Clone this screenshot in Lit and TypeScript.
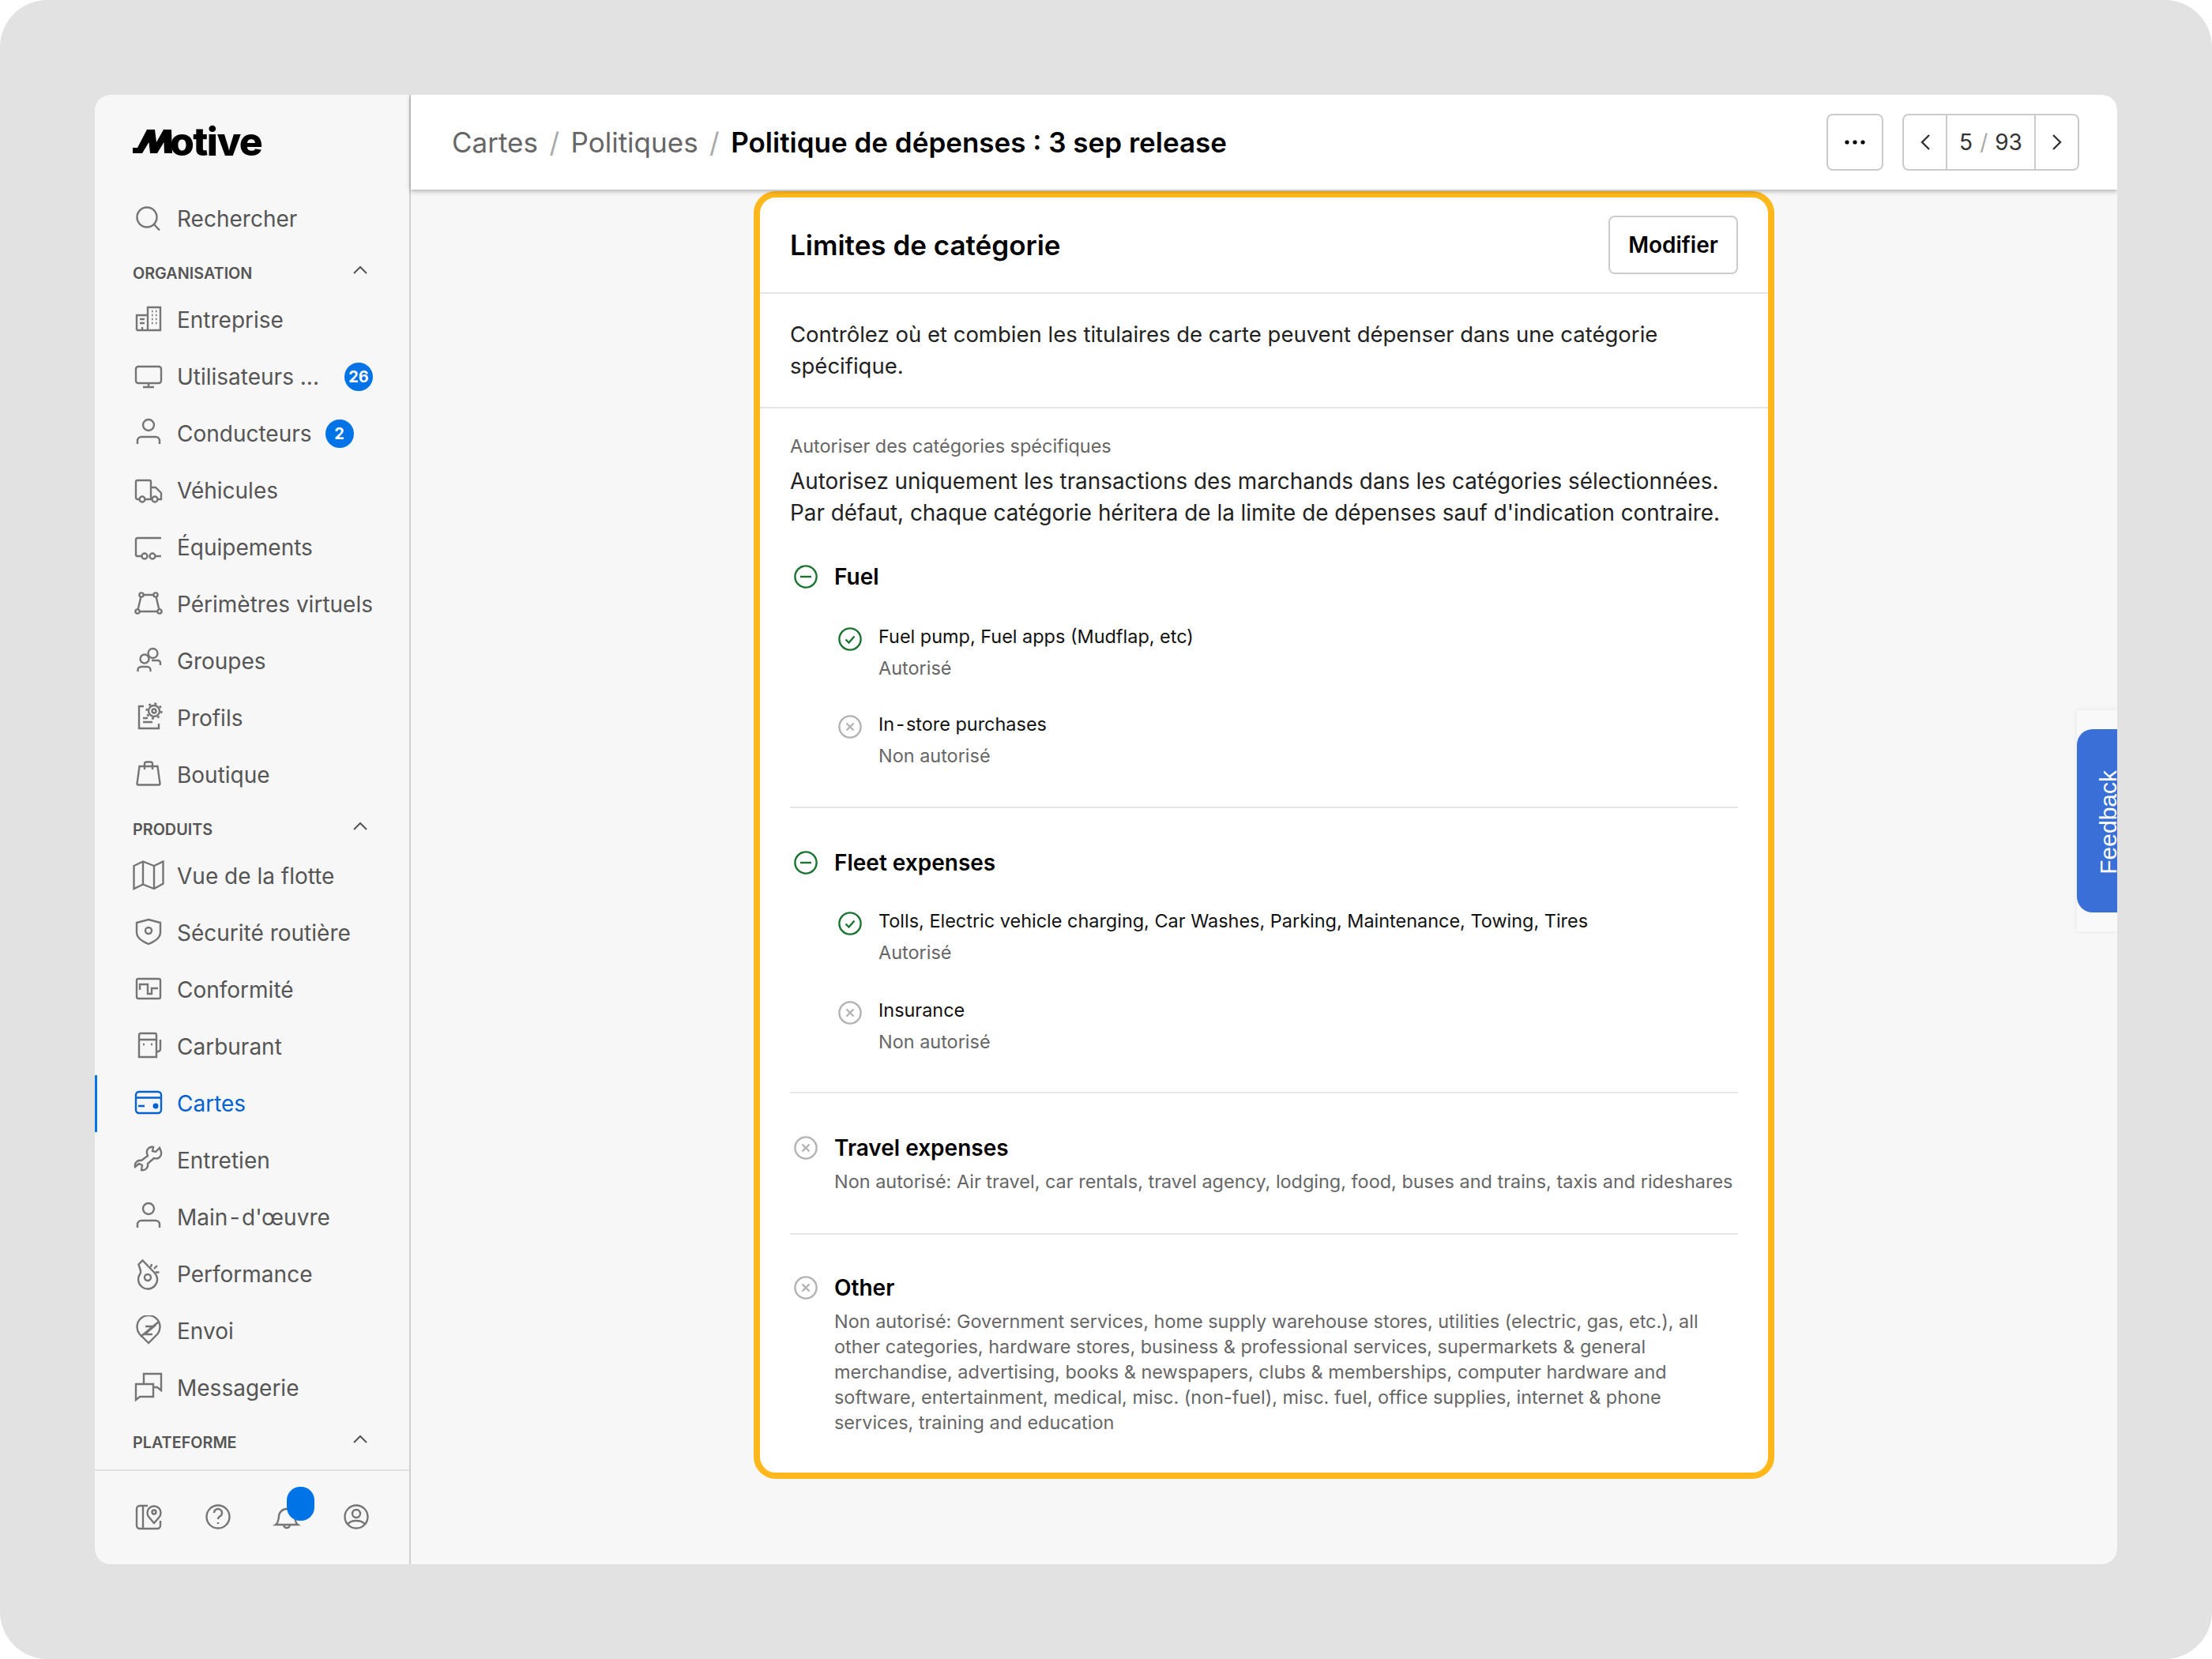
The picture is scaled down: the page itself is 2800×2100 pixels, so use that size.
import { LitElement, html, css, svg } from 'lit';
import { customElement } from 'lit/decorators.js';

const ICONS: Record<string, unknown> = {
  search: svg`<circle cx="18" cy="18" r="12.5"/><path d="M27 27l7 7.5"/>`,
  building: svg`<path d="M5 33V14h14M19 33V4h16v29zM5 33h30M9 19h6M9 24h6M12 29v4M24 9h1.5M29 9h1.5M24 14h1.5M29 14h1.5M24 19h1.5M29 19h1.5M24 24h1.5M29 24h1.5"/>`,
  monitor: svg`<rect x="4" y="7" width="32" height="21" rx="3"/><path d="M20 28v5M13 33h14"/>`,
  person: svg`<circle cx="20" cy="9" r="7"/><path d="M6 33v-4a5 5 0 0 1 5-5h18a5 5 0 0 1 5 5v4"/>`,
  truck: svg`<path d="M8 31H6a2 2 0 0 1-2-2V9a2 2 0 0 1 2-2h15a2 2 0 0 1 2 2v22h-7M23 16h6l7 7v8h-4M23 31h1"/><circle cx="12" cy="31" r="3.5"/><circle cx="28" cy="31" r="3.5"/>`,
  trailer: svg`<path d="M36 8H6a2 2 0 0 0-2 2v19a2 2 0 0 0 2 2h5M29 31h7"/><circle cx="15" cy="31" r="3.5"/><circle cx="25" cy="31" r="3.5"/>`,
  geofence: svg`<path d="M11 8h18l5 21H6z"/><circle cx="11" cy="8" r="2.6" fill="#f7f7f7"/><circle cx="29" cy="8" r="2.6" fill="#f7f7f7"/><circle cx="6" cy="29" r="2.6" fill="#f7f7f7"/><circle cx="34" cy="29" r="2.6" fill="#f7f7f7"/>`,
  group: svg`<circle cx="15" cy="17" r="5.5"/><circle cx="25.5" cy="10" r="6"/><path d="M6.5 33v-2a4 4 0 0 1 4-4h8a4 4 0 0 1 4 4v2M24 19h8a3 3 0 0 1 3 3v3"/>`,
  profile: svg`<path d="M14 5H8v28h25v-6M13 20h6M13 25h12"/><circle cx="27" cy="11" r="2.5"/><circle cx="27" cy="11" r="7"/><circle cx="27" cy="11" r="9.5" stroke-dasharray="3 4.46"/>`,
  bag: svg`<path d="M8.5 9h23l3 22a1.5 1.5 0 0 1-1.5 1.5H7A1.5 1.5 0 0 1 5.5 31zM15 13V6a2.5 2.5 0 0 1 2.5-2.5h5A2.5 2.5 0 0 1 25 6v7"/>`,
  map: svg`<path d="M1.5 7L13 1.5 27 7l11.5-5.5v28L27 36l-14-5.5L1.5 36zM13 1.5v29M27 7v29"/>`,
  shield: svg`<path d="M20 3l15 4v12c0 7-6 11-15 15C11 30 5 26 5 19V7z"/><circle cx="20" cy="17" r="4"/>`,
  compliance: svg`<rect x="5" y="6" width="30" height="25" rx="2"/><path d="M9 20v-7h10v12h5v-7h8"/>`,
  fuel: svg`<path d="M8 33V5a2 2 0 0 1 2-2h18a2 2 0 0 1 2 2v28zM8 11h22M30 26h2a3 3 0 0 0 3-3V11M13 17h2M23 17h2"/>`,
  card: svg`<rect x="4" y="5" width="32" height="27" rx="4"/><path d="M4 12.5h32M7 23h8"/><circle cx="29" cy="23" r="3.5" fill="currentColor" stroke="none"/>`,
  wrench: svg`<path d="M34 4l-5 5-4-1 1-5c-5-1-9 3-8 8l1 3-8 6c-5-1-9 3-8 8l5-4 4 2-1 6c5 1 9-3 8-8l8-7c5 2 10-2 9-8z"/>`,
  whistle: svg`<path d="M7.5 7.5l5-5L27.5 18a12 12 0 1 1-18.5 2c1.5-2.2 1.5-3.5.5-6z"/><circle cx="19" cy="24" r="4"/><path d="M23 11l1-4M27 13l4-4M28.5 17.5h5"/>`,
  dispatch: svg`<path d="M20 35L8.5 23.5a14.5 14.5 0 1 1 23 0z"/><path d="M33 8L10 27M16 14h11L15 24h10"/>`,
  chat: svg`<path d="M14 14V2h22v21l-5-4h-5M4 15h22v16H9l-5 4z"/>`,
  book: svg`<path d="M19 6H9a4 4 0 0 0-4 4v21a4 4 0 0 0 4 4h22a4 4 0 0 0 4-4v-6M13 6v29M27 28l-6-7a8.5 8.5 0 1 1 12 0z"/><circle cx="27" cy="14" r="2.5"/>`,
  help: svg`<circle cx="20" cy="20" r="14.5"/><path d="M15 15a5 5 0 1 1 8 4c-2 1-3 2-3 4M20 27v2"/>`,
  bell: svg`<path d="M6 30c3-2 3-5 4-10a10 10 0 0 1 20 0c1 5 1 8 4 10zM16 30a4 4 0 0 0 8 0"/>`,
  account: svg`<circle cx="20" cy="20" r="14.5"/><circle cx="20" cy="16" r="5"/><path d="M9 30c2-4 5-5 11-5s9 1 11 5"/>`,
};

const icon = (name: string) =>
  html`<svg class="ico" viewBox="0 0 40 40" fill="none" stroke="currentColor" stroke-width="2.4">${ICONS[name]}</svg>`;

const statusIcon = (kind: string) => html`
  <svg class="status ${kind}" viewBox="0 0 30 30" fill="none" stroke="currentColor" stroke-width="2.4">
    <circle cx="15" cy="15" r="13.6"/>
    ${kind === 'minus' ? svg`<path d="M8 15h14"/>` : ''}
    ${kind === 'check' ? svg`<path d="M9.5 15.5l4 4 7-8"/>` : ''}
    ${kind === 'cross' ? svg`<path d="M10.5 10.5l9 9M19.5 10.5l-9 9"/>` : ''}
  </svg>`;

const chevron = html`<svg class="chev" viewBox="0 0 20 12" fill="none" stroke="currentColor" stroke-width="2"><path d="M2 10l8-8 8 8"/></svg>`;

// the hyphen sits wider than Inter's own in the reference
const hyphen = html`<span class="hy">-</span>`;
const hy = (text: string) => text.split('-').map((part, i) => (i ? html`${hyphen}${part}` : part));

type NavItem = { label: string; icon: string; badge?: string; active?: boolean };

const ORG: NavItem[] = [
  { label: 'Entreprise', icon: 'building' },
  { label: 'Utilisateurs ...', icon: 'monitor', badge: '26' },
  { label: 'Conducteurs', icon: 'person', badge: '2' },
  { label: 'Véhicules', icon: 'truck' },
  { label: 'Équipements', icon: 'trailer' },
  { label: 'Périmètres virtuels', icon: 'geofence' },
  { label: 'Groupes', icon: 'group' },
  { label: 'Profils', icon: 'profile' },
  { label: 'Boutique', icon: 'bag' },
];

const PRODUCTS: NavItem[] = [
  { label: 'Vue de la flotte', icon: 'map' },
  { label: 'Sécurité routière', icon: 'shield' },
  { label: 'Conformité', icon: 'compliance' },
  { label: 'Carburant', icon: 'fuel' },
  { label: 'Cartes', icon: 'card', active: true },
  { label: 'Entretien', icon: 'wrench' },
  { label: "Main-d'œuvre", icon: 'person' },
  { label: 'Performance', icon: 'whistle' },
  { label: 'Envoi', icon: 'dispatch' },
  { label: 'Messagerie', icon: 'chat' },
];

@customElement('app-root')
export class AppRoot extends LitElement {
  static styles = css`
    :host {
      display: block;
      width: 2800px;
      height: 2100px;
      background: #fff;
      font-family: Inter, 'Liberation Sans', sans-serif;
      color: #000;
    }
    .hy {
      margin: 0 0.085em;
    }
    .frame {
      height: 100%;
      box-sizing: border-box;
      padding: 120px;
      background: #e2e2e2;
      border-radius: 60px;
    }
    .window {
      position: relative;
      display: flex;
      height: 1860px;
      border-radius: 20px;
      overflow: hidden;
      background: #f7f7f7;
    }

    /* sidebar */
    .side {
      width: 400px;
      flex: none;
      box-sizing: border-box;
      display: flex;
      flex-direction: column;
      border-right: 2px solid #cfcfcf;
      color: #555;
    }
    .logo {
      height: 121px;
      box-sizing: border-box;
      padding: 36px 0 0 48px;
      display: flex;
      color: #000;
    }
    .logo svg {
      width: 50px;
      height: 30px;
      margin-top: 8px;
      flex: none;
    }
    .logo span {
      font-size: 50px;
      line-height: 46px;
      height: 46px;
      font-weight: 800;
      letter-spacing: -1.6px;
      margin-left: -3px;
    }
    .nav {
      flex: 1;
    }
    .row {
      position: relative;
      height: 72px;
      display: flex;
      align-items: center;
      padding-left: 48px;
      font-size: 28px;
    }
    .row.active {
      color: #0062d1;
    }
    .row.active::before {
      content: '';
      position: absolute;
      left: 0;
      top: 0;
      bottom: 0;
      width: 3px;
      background: #0073e6;
    }
    .ico {
      width: 40px;
      height: 40px;
      flex: none;
      margin-right: 16px;
      color: #757575;
    }
    .active .ico {
      color: #0062d1;
    }
    .badge {
      height: 36px;
      min-width: 36px;
      box-sizing: border-box;
      padding: 0 5px;
      border-radius: 18px;
      background: #0073e6;
      color: #fff;
      font-size: 20px;
      font-weight: 700;
      display: flex;
      align-items: center;
      justify-content: center;
      margin-left: 17px;
    }
    .row.wide .badge {
      margin-left: 32px;
    }
    .head {
      display: flex;
      align-items: center;
      justify-content: space-between;
      height: 46px;
      margin-top: 10px;
      padding: 0 52px 0 48px;
      font-size: 19.8px;
      font-weight: 600;
    }
    .chev {
      width: 20px;
      height: 12px;
      margin-top: -8px;
    }
    .foot {
      height: 120px;
      flex: none;
      box-sizing: border-box;
      border-top: 2px solid #e2e2e2;
      display: flex;
      padding: 38px 0 0 48px;
      gap: 47.5px;
    }
    .foot .ico {
      margin: 0;
    }
    .bell {
      position: relative;
      width: 40px;
      height: 40px;
    }
    .dot {
      position: absolute;
      left: 20px;
      top: -18px;
      width: 35px;
      height: 43px;
      border-radius: 17px;
      background: #0073e6;
    }

    /* main column */
    .main {
      flex: 1;
      display: flex;
      flex-direction: column;
      min-width: 0;
    }
    .top {
      height: 120px;
      flex: none;
      box-sizing: border-box;
      display: flex;
      align-items: center;
      padding: 0 48px 0 52px;
      background: #fff;
      box-shadow: 0 2px 6px rgba(0, 0, 0, 0.3);
      position: relative;
      font-size: 35px;
    }
    .crumbs {
      flex: 1;
      display: flex;
      align-items: center;
      color: #666;
    }
    .crumbs i {
      font-style: normal;
      margin: 0 14.5px;
      color: #aaa;
    }
    .crumbs b {
      font-weight: 600;
      color: #000;
    }
    .btn {
      width: 72px;
      height: 72px;
      box-sizing: border-box;
      border: 2px solid #ccc;
      border-radius: 8px;
      display: flex;
      align-items: center;
      justify-content: center;
      margin-right: 24px;
    }
    .pager {
      height: 72px;
      box-sizing: border-box;
      display: flex;
      border: 2px solid #ccc;
      border-radius: 8px;
      font-size: 28px;
      color: #333;
    }
    .pager div {
      display: flex;
      align-items: center;
      justify-content: center;
    }
    .pager .arrow {
      width: 53px;
    }
    .pager .count {
      width: 114px;
      box-sizing: border-box;
      border-left: 2px solid #ccc;
      border-right: 2px solid #ccc;
      gap: 9px;
    }
    .pager .count span {
      color: #aaa;
    }
    .content {
      flex: 1;
      display: flex;
      justify-content: center;
      padding-top: 2px;
    }

    /* card */
    .card {
      width: 1292px;
      height: 1630px;
      box-sizing: border-box;
      border: 8px solid #ffb81c;
      border-radius: 28px;
      background: #fff;
    }
    .card-head {
      height: 122px;
      box-sizing: border-box;
      display: flex;
      align-items: center;
      justify-content: space-between;
      padding: 0 38px;
      border-bottom: 2px solid #e6e6e6;
    }
    .card-head h2 {
      margin: 0;
      font-size: 35px;
      font-weight: 600;
    }
    .modify {
      width: 164px;
      height: 74px;
      box-sizing: border-box;
      border: 2px solid #ccc;
      border-radius: 8px;
      font-size: 28px;
      font-weight: 600;
      display: flex;
      align-items: center;
      justify-content: center;
    }
    .intro {
      height: 145px;
      box-sizing: border-box;
      padding: 31px 38px 0;
      font-size: 27.5px;
      line-height: 40px;
      color: #222;
      border-bottom: 2px solid #e6e6e6;
    }
    .rules {
      padding: 30px 38px 0;
    }
    .caption {
      font-size: 23.45px;
      line-height: 36px;
      color: #666;
    }
    .lead {
      margin-top: 6px;
      font-size: 27.85px;
      line-height: 40px;
      color: #222;
    }
    .cat {
      box-sizing: border-box;
      border-bottom: 2px solid #e6e6e6;
    }
    .cat:last-child {
      border-bottom: 0;
    }
    .cat-head {
      display: flex;
      align-items: center;
      gap: 21px;
      padding-left: 5px;
      font-size: 28px;
      line-height: 40px;
      font-weight: 600;
    }
    .status {
      width: 30px;
      height: 30px;
      flex: none;
    }
    .status.minus,
    .status.check {
      color: #1a7431;
    }
    .status.cross {
      color: #b3b3b3;
    }
    .sub {
      display: flex;
      gap: 21px;
      padding-left: 61px;
      font-size: 23.45px;
      line-height: 40px;
      color: #111;
    }
    .sub .status {
      margin-top: 8px;
    }
    .muted {
      color: #666;
    }
    .note {
      font-size: 23.45px;
      line-height: 32px;
      color: #666;
      padding-left: 56px;
      margin-top: 7px;
    }
    .feedback-wrap {
      position: absolute;
      right: 0;
      top: 779px;
      width: 51px;
      height: 280px;
      box-sizing: border-box;
      padding-top: 24px;
      background: #f9f9f9;
      box-shadow: 0 0 6px rgba(0, 0, 0, 0.08);
    }
    .feedback {
      height: 232px;
      box-sizing: border-box;
      background: #396fd6;
      border-radius: 20px 0 0 20px;
      color: #fff;
      font-family: 'Liberation Sans', Arial, sans-serif;
      font-size: 30px;
      display: flex;
      align-items: center;
      justify-content: flex-end;
    }
    .feedback span {
      writing-mode: vertical-rl;
      transform: rotate(180deg);
      line-height: 22px;
      margin-top: 3px;
    }
  `;

  private renderRow(item: NavItem) {
    const wide = item.label.endsWith('...');
    return html`<div class="row ${item.active ? 'active' : ''} ${wide ? 'wide' : ''}">
      ${icon(item.icon)}<span>${hy(item.label)}</span>
      ${item.badge ? html`<span class="badge">${item.badge}</span>` : ''}
    </div>`;
  }

  private renderSub(kind: string, title: string, state: string, top: number) {
    return html`<div class="sub" style="margin-top:${top}px">
      ${statusIcon(kind)}
      <div>${hy(title)}<div class="muted">${state}</div></div>
    </div>`;
  }

  render() {
    return html`
      <div class="frame">
        <div class="window">
          <aside class="side">
            <div class="logo">
              <svg viewBox="0 0 50 30"><path d="M0 30v-7h6L18 0h10l2 16L39 0h10l1 30H40l-.5-14L31 30h-9l-1.5-14L12 30z"/></svg>
              <span>otive</span>
            </div>
            <div class="nav">
              <div class="row">${icon('search')}<span>Rechercher</span></div>
              <div class="head"><span>ORGANISATION</span>${chevron}</div>
              ${ORG.map((i) => this.renderRow(i))}
              <div class="head"><span>PRODUITS</span>${chevron}</div>
              ${PRODUCTS.map((i) => this.renderRow(i))}
              <div class="head"><span>PLATEFORME</span>${chevron}</div>
            </div>
            <div class="foot">
              ${icon('book')}${icon('help')}
              <div class="bell">${icon('bell')}<div class="dot"></div></div>
              ${icon('account')}
            </div>
          </aside>
          <div class="main">
            <header class="top">
              <div class="crumbs">
                <span>Cartes</span><i>/</i><span>Politiques</span><i>/</i>
                <b>Politique de dépenses : 3 sep release</b>
              </div>
              <div class="btn">
                <svg width="26" height="6" viewBox="0 0 26 6"><circle cx="3" cy="3" r="2.6"/><circle cx="13" cy="3" r="2.6"/><circle cx="23" cy="3" r="2.6"/></svg>
              </div>
              <div class="pager">
                <div class="arrow"><svg width="14" height="22" viewBox="0 0 14 22" fill="none" stroke="#333" stroke-width="2.4"><path d="M12 2l-9 9 9 9"/></svg></div>
                <div class="count">5 <span>/</span> 93</div>
                <div class="arrow"><svg width="14" height="22" viewBox="0 0 14 22" fill="none" stroke="#333" stroke-width="2.4"><path d="M2 2l9 9-9 9"/></svg></div>
              </div>
            </header>
            <div class="content">
              <section class="card">
                <div class="card-head">
                  <h2>Limites de catégorie</h2>
                  <div class="modify">Modifier</div>
                </div>
                <div class="intro">Contrôlez où et combien les titulaires de carte peuvent dépenser dans une catégorie spécifique.</div>
                <div class="rules">
                  <div class="caption">Autoriser des catégories spécifiques</div>
                  <div class="lead">Autorisez uniquement les transactions des marchands dans les catégories sélectionnées. Par défaut, chaque catégorie héritera de la limite de dépenses sauf d'indication contraire.</div>
                  <div class="cat" style="margin-top:41px;height:313px">
                    <div class="cat-head">${statusIcon('minus')}Fuel</div>
                    ${this.renderSub('check', 'Fuel pump, Fuel apps (Mudflap, etc)', 'Autorisé', 36)}
                    ${this.renderSub('cross', 'In-store purchases', 'Non autorisé', 31)}
                  </div>
                  <div class="cat" style="padding-top:49px;height:361px">
                    <div class="cat-head">${statusIcon('minus')}Fleet expenses</div>
                    ${this.renderSub('check', 'Tolls, Electric vehicle charging, Car Washes, Parking, Maintenance, Towing, Tires', 'Autorisé', 34)}
                    ${this.renderSub('cross', 'Insurance', 'Non autorisé', 33)}
                  </div>
                  <div class="cat" style="padding-top:49px;height:179px">
                    <div class="cat-head">${statusIcon('cross')}Travel expenses</div>
                    <div class="note">Non autorisé: Air travel, car rentals, travel agency, lodging, food, buses and trains, taxis and rideshares</div>
                  </div>
                  <div class="cat" style="padding-top:47px">
                    <div class="cat-head">${statusIcon('cross')}Other</div>
                    <div class="note">Non autorisé: Government services, home supply warehouse stores, utilities (electric, gas, etc.), all other categories, hardware stores, business &amp; professional services, supermarkets &amp; general merchandise, advertising, books &amp; newspapers, clubs &amp; memberships, computer hardware and software, entertainment, medical, misc. (non-fuel), misc. fuel, office supplies, internet &amp; phone services, training and education</div>
                  </div>
                </div>
              </section>
            </div>
          </div>
          <div class="feedback-wrap"><div class="feedback"><span>Feedback</span></div></div>
        </div>
      </div>
    `;
  }
}
